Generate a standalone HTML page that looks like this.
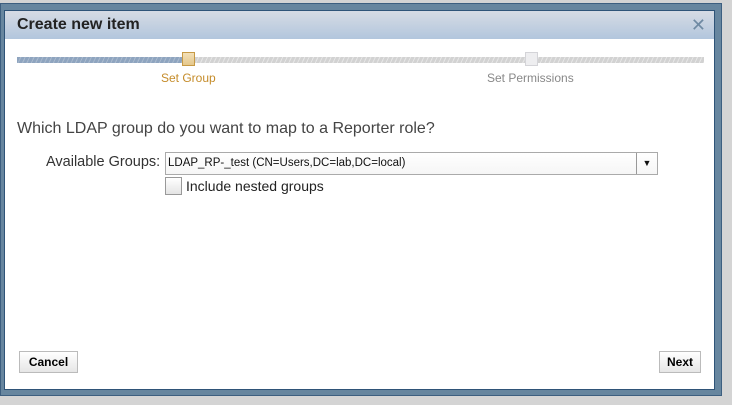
<!DOCTYPE html>
<html><head><style>
body{margin:0;width:732px;height:405px;background:#d4d4d4;position:relative;overflow:hidden;font-family:"Liberation Sans",sans-serif}
.frame{position:absolute;left:0;top:3px;width:722px;height:393px;background:#67869f;border:1px solid #3d5f80;box-sizing:border-box}
.panel{position:absolute;left:4px;top:10px;width:711px;height:380px;background:#fff;border:1px solid #2f5478;box-sizing:border-box}
.title{position:absolute;left:0;top:0;right:0;height:28px;background:linear-gradient(#d6dbe4,#b2c6dd);font-weight:bold;font-size:16px;color:#222;line-height:28px;padding-left:12px}
.x{position:absolute;right:8px;top:0;color:#6f8aa3;font-size:18px;font-weight:normal}
.bar{position:absolute;top:57px;height:6px}
.step{position:absolute;top:52px;width:13px;height:14px;box-sizing:border-box}
.lbl{position:absolute;top:71px;font-size:12px}
</style></head><body>
<div class="frame"></div>
<div class="panel">
<div class="title">Create new item<span class="x">✕</span></div>
</div>
<div class="bar" style="left:17px;width:166px;background:repeating-linear-gradient(115deg,#8ea4bf 0 3px,#a9bace 3px 4px)"></div>
<div class="bar" style="left:195px;width:509px;background:repeating-linear-gradient(115deg,#d2d2d2 0 3px,#e6e6e6 3px 4px)"></div>
<div class="step" style="left:182px;background:linear-gradient(#f3e0b8,#e5c88c);border:1px solid #c79a45"></div>
<div class="step" style="left:525px;background:#eeeef0;border:1px solid #d4d4d8"></div>
<div class="lbl" style="left:161px;color:#c58c2a">Set Group</div>
<div class="lbl" style="left:487px;color:#888">Set Permissions</div>
<div style="position:absolute;left:17px;top:120px;font-size:16px;color:#444">Which LDAP group do you want to map to a Reporter role?</div>
<div style="position:absolute;left:46px;top:154px;font-size:14.5px;color:#333">Available Groups:</div>
<div style="position:absolute;left:165px;top:152px;width:493px;height:23px;border:1px solid #aaa;box-sizing:border-box;background:linear-gradient(#fff,#f6f6f6);font-size:11.5px;line-height:21px;padding-left:2px;color:#111">LDAP_RP-_test (CN=Users,DC=lab,DC=local)
<div style="position:absolute;right:0;top:0;width:20px;height:21px;border-left:1px solid #999;font-size:9px;text-align:center;line-height:21px">▼</div></div>
<div style="position:absolute;left:165px;top:177px;width:17px;height:18px;border:1px solid #999;box-sizing:border-box;background:linear-gradient(#fff,#e4e4e4)"></div>
<div style="position:absolute;left:186px;top:178px;font-size:14px;color:#222">Include nested groups</div>
<div style="position:absolute;left:19px;top:351px;width:59px;height:22px;border:1px solid #bbb;box-sizing:border-box;background:linear-gradient(#fff,#e6e6e6);font-size:12px;font-weight:bold;text-align:center;line-height:20px">Cancel</div>
<div style="position:absolute;left:659px;top:351px;width:42px;height:22px;border:1px solid #bbb;box-sizing:border-box;background:linear-gradient(#fff,#e6e6e6);font-size:12px;font-weight:bold;text-align:center;line-height:20px">Next</div>
</body></html>
